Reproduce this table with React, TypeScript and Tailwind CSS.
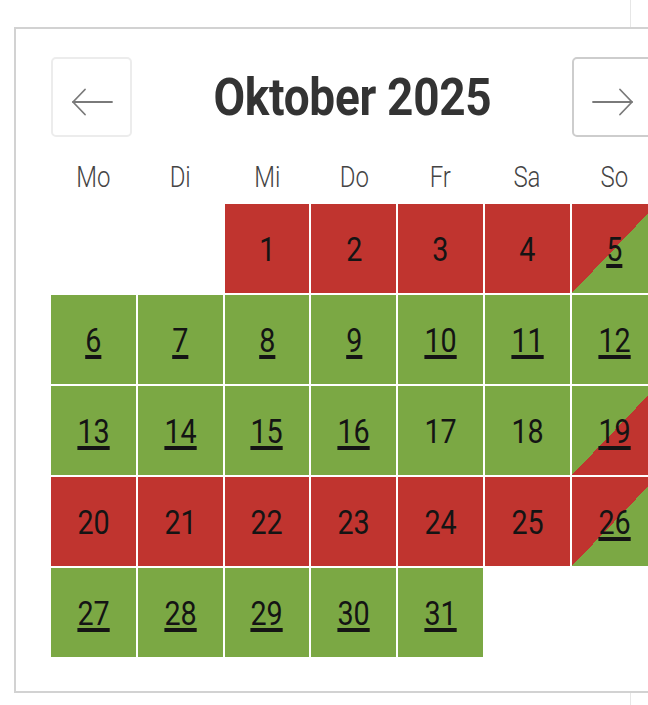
import React from "react";

type Kind = "red" | "green" | "greenNo" | "rg" | "gr";

const days: { d: number; k: Kind }[] = [];
for (let d = 1; d <= 31; d++) {
  let k: Kind = "green";
  if (d <= 4) k = "red";
  else if (d === 5) k = "rg";
  else if (d === 17 || d === 18) k = "greenNo";
  else if (d === 19) k = "gr";
  else if (d >= 20 && d <= 25) k = "red";
  else if (d === 26) k = "rg";
  days.push({ d, k });
}

function cellClass(k: Kind) {
  switch (k) {
    case "red":
      return "bg-[#c0342f]";
    case "green":
    case "greenNo":
      return "bg-[#7ba844]";
    case "rg":
      return "bg-[linear-gradient(to_bottom_right,#c0342f_50%,#7ba844_50%)]";
    case "gr":
      return "bg-[linear-gradient(to_bottom_right,#7ba844_50%,#c0342f_50%)]";
  }
}

function Arrow({ dir }: { dir: "left" | "right" }) {
  return (
    <svg width="42" height="28" viewBox="0 0 42 28" className="mt-[10px]">
      {dir === "left" ? (
        <g stroke="#7a7a7a" strokeWidth="1.8" fill="none" strokeLinecap="round" strokeLinejoin="round">
          <path d="M2 14 H41" />
          <path d="M14 1.5 L2 14 L14 26.5" />
        </g>
      ) : (
        <g stroke="#7a7a7a" strokeWidth="1.8" fill="none" strokeLinecap="round" strokeLinejoin="round">
          <path d="M1 14 H40" />
          <path d="M28 1.5 L40 14 L28 26.5" />
        </g>
      )}
    </svg>
  );
}

export default function App() {
  const labels = ["Mo", "Di", "Mi", "Do", "Fr", "Sa", "So"];
  return (
    <div className="relative w-[648px] h-[705px] overflow-hidden bg-white font-['Roboto',sans-serif]">
      <div className="absolute left-[630px] top-0 h-full w-px bg-[#e6e6e6]" />
      <div className="relative ml-[14px] mt-[27px] w-[680px] h-[666px] border-2 border-[#d2d2d2] bg-white px-[35px] pt-[28px]">
        <div className="flex h-[80px] w-[602px] items-center justify-between">
          <button className="flex h-[80px] w-[81px] items-center justify-center rounded-[5px] border-2 border-[#ececec] bg-white">
            <Arrow dir="left" />
          </button>
          <div className="text-[51px] font-bold leading-none text-[#333333]">
            <span className="inline-block scale-x-[0.9] tracking-[-0.3px]">Oktober 2025</span>
          </div>
          <button className="flex h-[80px] w-[81px] items-center justify-center rounded-[5px] border-2 border-[#cdcdcd] bg-white">
            <Arrow dir="right" />
          </button>
        </div>
        <div className="grid grid-cols-[repeat(7,84.8px)] gap-x-[2px] pt-[20px] h-[67px]">
          {labels.map((l) => (
            <div key={l} className="flex h-[38px] items-center justify-center text-[30px] font-light text-[#444444]">
              <span className="inline-block scale-x-[0.8]">{l}</span>
            </div>
          ))}
        </div>
        <div className="grid grid-cols-[repeat(7,84.8px)] auto-rows-[89px] gap-[2px]">
          <div />
          <div />
          {days.map(({ d, k }) => {
            const underlined = k !== "red" && k !== "greenNo";
            return (
              <div key={d} className={`flex items-center justify-center pt-[2px] ${cellClass(k)}`}>
                <span
                  className={`inline-block scale-x-[0.87] text-[33px] leading-none text-[#141414] ${
                    underlined ? "underline decoration-[4px] underline-offset-[3px]" : ""
                  }`}
                >
                  {d}
                </span>
              </div>
            );
          })}
        </div>
      </div>
    </div>
  );
}
